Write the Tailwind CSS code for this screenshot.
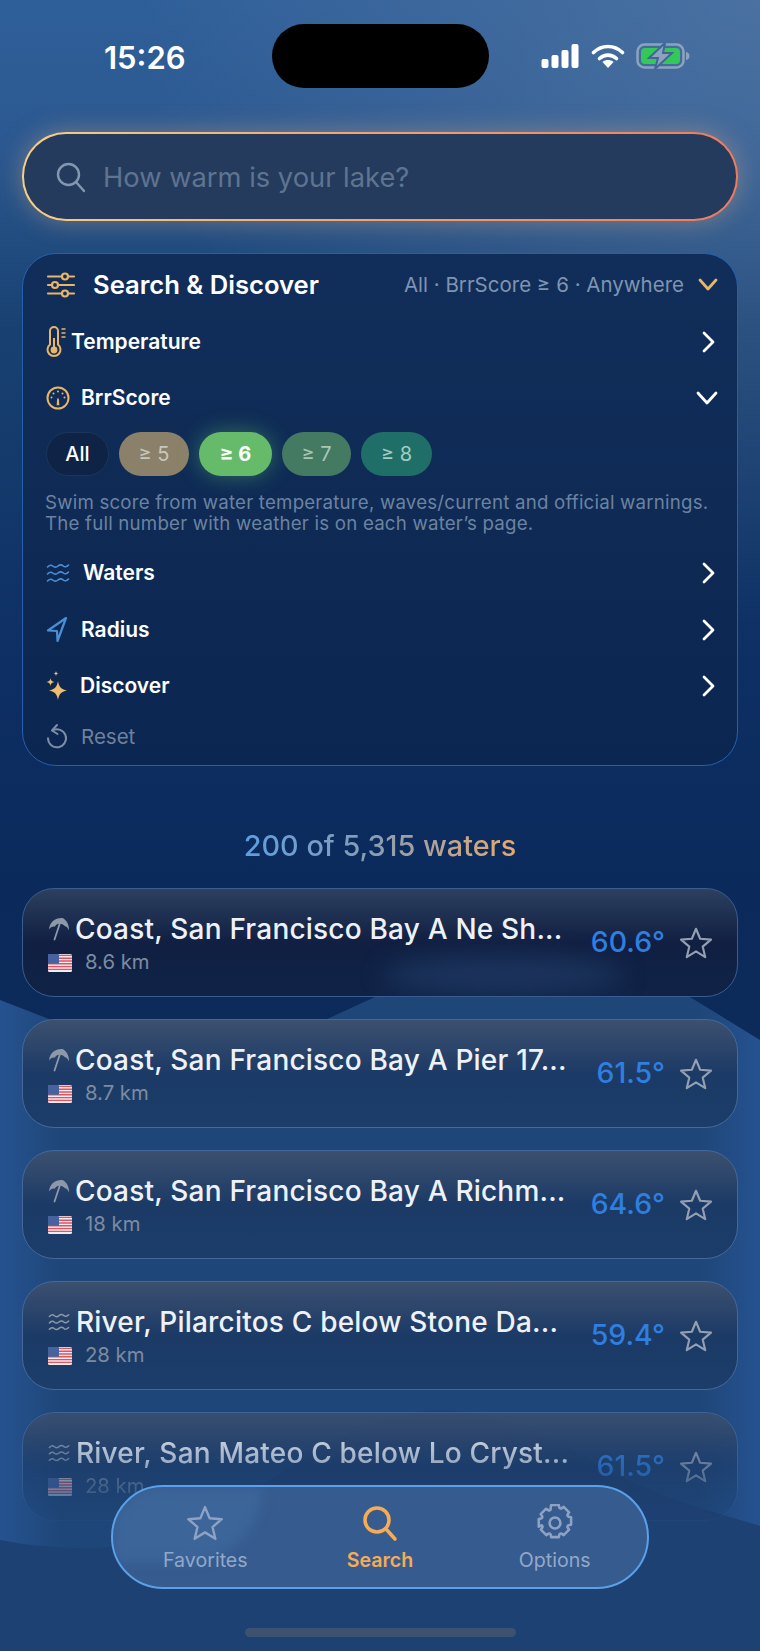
<!DOCTYPE html>
<html lang="en">

<head>
  <meta charset="UTF-8" />
  <meta name="viewport" content="width=device-width, initial-scale=1.0" />
  <title>Search | BrrScore</title>
  <script src="https://cdn.jsdelivr.net/npm/@tailwindcss/browser@4"></script>
</head>

<body class="bg-[#1e4476]">
  <!-- Shared icons -->
  <svg class="hidden" xmlns="http://www.w3.org/2000/svg">
    <symbol id="chev-right" viewBox="0 0 16 24"><path d="M4 3l9 9-9 9" fill="none" stroke="currentColor" stroke-width="2.800" stroke-linecap="round" stroke-linejoin="round" /></symbol>
    <symbol id="star" viewBox="0 0 32 32"><path d="M16 2.600l3.900 9.400 10.200.8-7.800 6.600 2.400 9.900L16 23.900l-8.700 5.400 2.400-9.900-7.800-6.600 10.200-.8z" fill="none" stroke="currentColor" stroke-width="2" stroke-linejoin="round" /></symbol>
    <symbol id="umbrella" viewBox="0 0 22 24"><path d="M14.500 1C7.500.5 1.500 5 1 12.500c1.500-2.500 3.500-3.500 6-3 1-2 2.500-3 4.500-2.800 2-.3 4 .5 5.500 2.500 1.500.2 3 1.500 4 4.300 .3-5.500-2.500-10.800-6.500-12.500z" fill="currentColor" /><path d="M12 6L6.500 22.500" fill="none" stroke="currentColor" stroke-width="1.800" stroke-linecap="round" /></symbol>
    <symbol id="waves" viewBox="0 0 24 20"><g fill="none" stroke="currentColor" stroke-width="1.600" stroke-linecap="round"><path d="M1.500 4c2-2.200 4-2.200 5.200-1 1.600 1.500 3.600 1.500 5.300 0s3.600-1.500 5.300 0c1.200 1.200 3.200 1.200 5.200-1" /><path d="M1.500 11c2-2.200 4-2.200 5.200-1 1.600 1.500 3.600 1.500 5.300 0s3.600-1.500 5.300 0c1.200 1.200 3.200 1.200 5.200-1" /><path d="M1.500 18c2-2.200 4-2.200 5.200-1 1.600 1.500 3.600 1.500 5.300 0s3.600-1.500 5.300 0c1.200 1.200 3.200 1.200 5.200-1" /></g></symbol>
    <symbol id="flag" viewBox="0 0 24 18">
      <rect width="24" height="18" rx="1.500" fill="#f2e9ea" />
      <path d="M0 1.400h24M0 4.200h24M0 7h24M0 9.800h24M0 12.600h24M0 15.400h24" stroke="#dc5565" stroke-width="1.400" />
      <rect width="11" height="9.800" rx="1" fill="#46639f" />
    </symbol>
  </svg>

  <div class="relative w-[760px] h-[1651px] overflow-hidden font-['Inter',sans-serif]">
    <!-- Backdrop with the two hills -->
    <svg class="absolute inset-0" width="760" height="1651" viewBox="0 0 760 1651" xmlns="http://www.w3.org/2000/svg" aria-hidden="true">
      <defs>
        <linearGradient id="sky" x1="0" y1="0" x2="0" y2="1">
          <stop offset="0" stop-color="#2f5f99" />
          <stop offset="0.09" stop-color="#2b5890" />
          <stop offset="0.2" stop-color="#184171" />
          <stop offset="0.4" stop-color="#0e2f64" />
          <stop offset="0.53" stop-color="#0b2a5c" />
          <stop offset="0.62" stop-color="#0c2a5a" />
        </linearGradient>
        <radialGradient id="glowRight" gradientUnits="userSpaceOnUse" cx="760" cy="0" r="620">
          <stop offset="0" stop-color="#5f7fa8" stop-opacity="0.55" />
          <stop offset="1" stop-color="#5f7fa8" stop-opacity="0" />
        </radialGradient>
        <linearGradient id="edges" x1="0" y1="0" x2="1" y2="0">
          <stop offset="0" stop-color="#255290" />
          <stop offset="0.08" stop-color="#1f4678" />
          <stop offset="0.92" stop-color="#1f4678" />
          <stop offset="1" stop-color="#255290" />
        </linearGradient>
      </defs>
      <rect width="760" height="1651" fill="url(#sky)" />
      <rect width="760" height="620" fill="url(#glowRight)" />
      <path d="M0 1000L62 1024 90 1040V1060H300L325 1020 375 997H690L760 1040V1651H0z" fill="url(#edges)" />
      <path d="M0 1540C50 1550 110 1552 160 1540 230 1524 300 1440 400 1415 470 1400 530 1425 600 1465 660 1500 710 1510 760 1526V1651H0z" fill="#1e4173" />
    </svg>

    <div class="relative px-[22px]">
      <!-- Status bar -->
      <div class="flex items-center justify-between h-[111px] pl-[82px] pr-[48px]">
        <span class="text-[31px] leading-none font-semibold text-white pt-[4px]">15:26</span>
        <div class="absolute left-[272px] top-[24px] w-[217px] h-[64px] rounded-[32px] bg-black"></div>
        <div class="flex items-center gap-[11px]">
          <svg width="39" height="24" viewBox="0 0 38 24" class="text-white"><g fill="currentColor"><rect x="0" y="15" width="7" height="9" rx="2" /><rect x="10" y="11" width="7" height="13" rx="2" /><rect x="20" y="6" width="7" height="18" rx="2" /><rect x="30" y="0" width="7" height="24" rx="2" /></g></svg>
          <svg width="34" height="24" viewBox="0 0 34 24" class="text-white"><g fill="none" stroke="currentColor" stroke-width="3.600" stroke-linecap="round"><path d="M2.500 8.500C11 .5 23 .5 31.500 8.500" /><path d="M8.500 14.500C13.500 10 20.500 10 25.500 14.500" /></g><path d="M17 24l-5.500-6c3-2.600 8-2.600 11 0z" fill="currentColor" /></svg>
          <svg width="54" height="26" viewBox="0 0 54 26">
            <rect x="1.500" y="1.500" width="46" height="23" rx="7" fill="none" stroke="#8ea2bd" stroke-width="2.500" />
            <rect x="5" y="5" width="39" height="16" rx="4" fill="#34c759" />
            <path d="M50 9c2.500.6 3.500 2 3.500 4s-1 3.400-3.500 4z" fill="#8ea2bd" />
            <path d="M29 0L13 15h9l-3 11 17-16h-9z" fill="#8ea2bd" stroke="#3f6698" stroke-width="2" />
          </svg>
        </div>
      </div>

      <!-- Search field -->
      <div class="mt-[21px] h-[89px] rounded-[44px] p-[2px] bg-gradient-to-r from-[#f6cf85] via-[#efa271] to-[#ee7b5e] shadow-[0_0_26px_rgba(238,180,130,0.38)]">
        <div class="flex items-center h-full rounded-[42px] bg-[#243b5e] pl-[31px]">
          <svg width="32" height="32" viewBox="0 0 32 32" class="text-[#8497ae]"><g fill="none" stroke="currentColor" stroke-width="2.400" stroke-linecap="round"><circle cx="13.500" cy="13.500" r="10.500" /><path d="M21 21l8 9" /></g></svg>
          <span class="ml-[16px] pt-[3px] text-[27.300px] text-[#5f748f]">How warm is your lake?</span>
        </div>
      </div>

      <!-- Search & Discover panel -->
      <section class="mt-[32px] h-[513px] rounded-[34px] border-[1.500px] border-[#2560ae] bg-gradient-to-b from-[#112e5a] to-[#0b2650] pl-[23px] pr-[19px] pt-[11px]">
        <div class="flex items-center h-[40px]">
          <svg width="30" height="26" viewBox="0 0 30 26" class="text-[#e9b566]"><g fill="none" stroke="currentColor" stroke-width="2.200" stroke-linecap="round"><path d="M2 4.500h26M2 13h26M2 21.500h26" /><circle cx="19" cy="4.500" r="3" fill="#112e5a" /><circle cx="9" cy="13" r="3" fill="#112e5a" /><circle cx="19" cy="21.500" r="3" fill="#112e5a" /></g></svg>
          <h2 class="ml-[17px] text-[25.600px] font-semibold text-white">Search &amp; Discover</h2>
          <span class="ml-auto text-[20.500px] text-[#7f94b0]">All · BrrScore ≥ 6 · Anywhere</span>
          <svg width="20" height="14" viewBox="0 0 20 14" class="ml-[14px] text-[#e9b566]"><path d="M2 2l8 9 8-9" fill="none" stroke="currentColor" stroke-width="2.800" stroke-linecap="round" stroke-linejoin="round" /></svg>
        </div>

        <div class="mt-[8px] flex items-center h-[57px]">
          <svg width="22" height="32" viewBox="0 0 22 32" class="text-[#e9b566]"><g fill="none" stroke="currentColor" stroke-width="2"><path d="M4 18.500V5a4 4 0 0 1 8 0v13.500a6.500 6.500 0 1 1-8 0z" /><path d="M15.500 3h4M15.500 7h4M15.500 11h4" stroke-width="1.500" /></g><circle cx="8" cy="24" r="3.400" fill="currentColor" /><path d="M8 24V12" stroke="currentColor" stroke-width="2" /></svg>
          <span class="ml-[3px] text-[21px] font-semibold text-white">Temperature</span>
          <svg width="16" height="24" class="ml-auto mr-[2px] text-white"><use href="#chev-right" /></svg>
        </div>

        <div class="flex items-center h-[56px]">
          <svg width="24" height="24" viewBox="0 0 24 24" class="text-[#e9b566]"><g fill="none" stroke="currentColor"><circle cx="12" cy="12" r="10.500" stroke-width="2" /><path d="M12 12.500l-.5 6h1z" stroke-width="1.600" /></g><g fill="currentColor"><circle cx="12" cy="5.500" r="1" /><circle cx="7.500" cy="7.500" r="1" /><circle cx="16.500" cy="7.500" r="1" /><circle cx="5.500" cy="11.500" r="1" /><circle cx="18.500" cy="11.500" r="1" /></g></svg>
          <span class="ml-[11px] text-[21px] font-semibold text-white">BrrScore</span>
          <svg width="22" height="14" viewBox="0 0 22 14" class="ml-auto text-white"><path d="M2 2l9 10 9-10" fill="none" stroke="currentColor" stroke-width="2.800" stroke-linecap="round" stroke-linejoin="round" /></svg>
        </div>

        <!-- Score chips -->
        <div class="mt-[6px] flex gap-[10px] text-[20px]">
          <span class="flex items-center justify-center h-[44px] w-[63px] rounded-[22px] border border-[#1c3658] bg-[#0e2345] font-medium text-white">All</span>
          <span class="flex items-center justify-center h-[44px] w-[70px] rounded-[22px] bg-[#8b8069] text-[#c8c6bd]">≥ 5</span>
          <span class="flex items-center justify-center h-[44px] w-[73px] rounded-[22px] bg-[#66bb6a] font-bold text-white shadow-[0_0_22px_rgba(90,190,110,0.45)]">≥ 6</span>
          <span class="flex items-center justify-center h-[44px] w-[69px] rounded-[22px] bg-[#447a62] text-[#a9c6b6]">≥ 7</span>
          <span class="flex items-center justify-center h-[44px] w-[71px] rounded-[22px] bg-[#1f6e67] text-[#a3cdc4]">≥ 8</span>
        </div>
        <p class="-ml-[1px] mt-[16px] text-[18.700px] leading-[21px] tracking-[0.200px] whitespace-nowrap text-[#6c83a0]">Swim score from water temperature, waves/current and official warnings.<br />The full number with weather is on each water’s page.</p>

        <div class="mt-[11px] flex items-center h-[56px]">
          <svg width="24" height="20" class="text-[#4a8fd6]"><use href="#waves" /></svg>
          <span class="ml-[13px] text-[21px] font-semibold text-white">Waters</span>
          <svg width="16" height="24" class="ml-auto mr-[2px] text-white"><use href="#chev-right" /></svg>
        </div>
        <div class="flex items-center h-[57px]">
          <svg width="22" height="28" viewBox="0 0 22 28" class="text-[#4a8fd6]"><path d="M20 2L2 14.500l9 .5 .5 10z" fill="none" stroke="currentColor" stroke-width="2.200" stroke-linejoin="round" /></svg>
          <span class="ml-[13px] text-[21px] font-semibold text-white">Radius</span>
          <svg width="16" height="24" class="ml-auto mr-[2px] text-white"><use href="#chev-right" /></svg>
        </div>
        <div class="flex items-center h-[56px]">
          <svg width="22" height="32" viewBox="0 0 22 32" class="text-[#efbd6d]"><g fill="currentColor"><path d="M12 11c1 6 3 8 9 9.500-6 1.500-8 3.500-9 9.500-1-6-3-8-9-9.500 6-1.500 8-3.500 9-9.500z" /><path d="M4.500 8c.4 2.600 1.300 3.500 4 4-2.700.5-3.600 1.400-4 4-.4-2.600-1.300-3.500-4-4 2.700-.5 3.600-1.400 4-4z" /><path d="M10 1c.3 1.800.8 2.300 2.500 2.600C10.800 3.900 10.300 4.400 10 6.200c-.3-1.800-.8-2.300-2.500-2.600C9.200 3.300 9.700 2.800 10 1z" /></g></svg>
          <span class="ml-[12px] text-[21px] font-semibold text-white">Discover</span>
          <svg width="16" height="24" class="ml-auto mr-[2px] text-white"><use href="#chev-right" /></svg>
        </div>
        <div class="flex items-center h-[46px]">
          <svg width="22" height="28" viewBox="0 0 22 28" class="text-[#7d8ea6]"><g fill="none" stroke="currentColor" stroke-width="2" stroke-linecap="round" stroke-linejoin="round"><path d="M6.500 7.500a9 9 0 1 1-4.500 7.800" /><path d="M11 2L6 7.500l5.500 3.500" /></g></svg>
          <span class="ml-[13px] text-[20.500px] text-[#6f819b]">Reset</span>
        </div>
      </section>

      <!-- Result count -->
      <p class="mt-[63px] text-center text-[28.800px] leading-[34px] font-medium bg-gradient-to-r from-[#5c9ee0] via-[#8c9db0] to-[#e8a868] bg-clip-text text-transparent w-fit mx-auto">200 of 5,315 waters</p>

      <!-- Results -->
      <div class="mt-[25px] flex flex-col gap-[22px]">
        <article class="relative flex items-center h-[109px] rounded-[32px] border-[1.500px] border-[#3a5c8e] bg-gradient-to-b from-[#2d405f] via-[#101f42] to-[#0f2347] pl-[25px] pr-[24px] overflow-hidden">
          <span class="absolute left-[360px] top-[66px] w-[240px] h-[40px] rounded-[50%] bg-[#2a4a78]/45 blur-[12px]"></span>
          <div class="relative flex-1 min-w-0 pt-[5px]">
            <div class="flex items-center gap-[5px]">
              <svg width="22" height="24" class="shrink-0 text-[#8d99aa]"><use href="#umbrella" /></svg>
              <span class="text-[28px] leading-[34px] tracking-[0.2px] font-medium whitespace-nowrap text-[#eef2f8]">Coast, San Francisco Bay A Ne Sh...</span>
            </div>
            <div class="mt-[1px] flex items-center gap-[13px] text-[20.300px] text-[#7d8ba1]">
              <svg width="24" height="18"><use href="#flag" /></svg><span>8.6 km</span>
            </div>
          </div>
          <span class="relative ml-[8px] text-[28.400px] font-medium text-[#2f7fe0]">60.6°</span>
          <svg width="34" height="34" class="relative ml-[14px] text-[#94a0b2]"><use href="#star" /></svg>
        </article>

        <article class="flex items-center h-[109px] rounded-[32px] border-[1.500px] border-[#44689b] bg-gradient-to-b from-[#3c506f] via-[#1b3a66] to-[#1c3d6a] pl-[25px] pr-[24px]">
          <div class="flex-1 min-w-0 pt-[5px]">
            <div class="flex items-center gap-[5px]">
              <svg width="22" height="24" class="shrink-0 text-[#8d99aa]"><use href="#umbrella" /></svg>
              <span class="text-[28px] leading-[34px] tracking-[0.2px] font-medium whitespace-nowrap text-[#eef2f8]">Coast, San Francisco Bay A Pier 17...</span>
            </div>
            <div class="mt-[1px] flex items-center gap-[13px] text-[20.300px] text-[#7d8ba1]">
              <svg width="24" height="18"><use href="#flag" /></svg><span>8.7 km</span>
            </div>
          </div>
          <span class="ml-[8px] text-[28.400px] font-medium text-[#2f7fe0]">61.5°</span>
          <svg width="34" height="34" class="ml-[14px] text-[#94a0b2]"><use href="#star" /></svg>
        </article>

        <article class="flex items-center h-[109px] rounded-[32px] border-[1.500px] border-[#44689b] bg-gradient-to-b from-[#3c506f] via-[#1b3a66] to-[#1c3d6a] pl-[25px] pr-[24px]">
          <div class="flex-1 min-w-0 pt-[5px]">
            <div class="flex items-center gap-[5px]">
              <svg width="22" height="24" class="shrink-0 text-[#8d99aa]"><use href="#umbrella" /></svg>
              <span class="text-[28px] leading-[34px] tracking-[0.2px] font-medium whitespace-nowrap text-[#eef2f8]">Coast, San Francisco Bay A Richm...</span>
            </div>
            <div class="mt-[1px] flex items-center gap-[13px] text-[20.300px] text-[#7d8ba1]">
              <svg width="24" height="18"><use href="#flag" /></svg><span>18 km</span>
            </div>
          </div>
          <span class="ml-[8px] text-[28.400px] font-medium text-[#2f7fe0]">64.6°</span>
          <svg width="34" height="34" class="ml-[14px] text-[#94a0b2]"><use href="#star" /></svg>
        </article>

        <article class="flex items-center h-[109px] rounded-[32px] border-[1.500px] border-[#44689b] bg-gradient-to-b from-[#3c506f] via-[#1b3a66] to-[#1c3d6a] pl-[25px] pr-[24px]">
          <div class="flex-1 min-w-0 pt-[5px]">
            <div class="flex items-center gap-[6px]">
              <svg width="22" height="20" class="shrink-0 text-[#8d99aa]"><use href="#waves" /></svg>
              <span class="text-[28px] leading-[34px] tracking-[0.2px] font-medium whitespace-nowrap text-[#eef2f8]">River, Pilarcitos C below Stone Da...</span>
            </div>
            <div class="mt-[1px] flex items-center gap-[13px] text-[20.300px] text-[#7d8ba1]">
              <svg width="24" height="18"><use href="#flag" /></svg><span>28 km</span>
            </div>
          </div>
          <span class="ml-[8px] text-[28.400px] font-medium text-[#2f7fe0]">59.4°</span>
          <svg width="34" height="34" class="ml-[14px] text-[#94a0b2]"><use href="#star" /></svg>
        </article>

        <article class="flex items-center h-[109px] rounded-[32px] border-[1.500px] border-[#44689b] bg-gradient-to-b from-[#3c506f] via-[#1b3a66] to-[#1c3d6a] pl-[25px] pr-[24px] [mask-image:linear-gradient(to_bottom,rgba(0,0,0,0.85)_20%,rgba(0,0,0,0.1)_100%)]">
          <div class="flex-1 min-w-0 pt-[5px]">
            <div class="flex items-center gap-[6px]">
              <svg width="22" height="20" class="shrink-0 text-[#8d99aa]"><use href="#waves" /></svg>
              <span class="text-[28px] leading-[34px] tracking-[0.2px] font-medium whitespace-nowrap text-[#eef2f8]">River, San Mateo C below Lo Cryst...</span>
            </div>
            <div class="mt-[1px] flex items-center gap-[13px] text-[20.300px] text-[#7d8ba1]">
              <svg width="24" height="18"><use href="#flag" /></svg><span>28 km</span>
            </div>
          </div>
          <span class="ml-[8px] text-[28.400px] font-medium text-[#2f7fe0]">61.5°</span>
          <svg width="34" height="34" class="ml-[14px] text-[#94a0b2]"><use href="#star" /></svg>
        </article>
      </div>
    </div>

    <!-- Floating tab bar -->
    <nav class="absolute left-[111px] top-[1485px] w-[538px] h-[104px] pt-[6px] rounded-[52px] border-2 border-[#5ba0e8] bg-[#365b8f] flex items-center text-[19.600px] text-[#93a8c8] overflow-hidden">
      <div class="absolute left-0 top-0 w-[150px] h-[75px] rounded-tl-[50px] rounded-br-[80px] bg-[#3f6a9f] blur-[6px] opacity-70"></div>
      <div class="relative flex-1 ml-[5px] flex flex-col items-center gap-[4px]">
        <svg width="38" height="38" class="text-[#8ea3c4]"><use href="#star" /></svg>
        <span>Favorites</span>
      </div>
      <div class="relative flex-1 flex flex-col items-center gap-[4px] text-[#f6ab55] font-semibold">
        <svg width="38" height="38" viewBox="0 0 38 38"><g fill="none" stroke="currentColor" stroke-width="3.600" stroke-linecap="round"><circle cx="16" cy="16" r="12" /><path d="M25 25l9 10" /></g></svg>
        <span>Search</span>
      </div>
      <div class="relative flex-1 mr-[5px] flex flex-col items-center gap-[4px]">
        <svg width="38" height="38" viewBox="2 1.500 20 21" class="text-[#8ea3c4]"><g fill="none" stroke="currentColor" stroke-width="1.400" stroke-linecap="round" stroke-linejoin="round"><path d="M9.600 3.400l.3-1.400h4.200l.3 1.400a.8.800 0 0 0 1.200.5l1.200-.8 3 3-.8 1.200a.8.800 0 0 0 .5 1.200l1.400.3v4.200l-1.400.3a.8.800 0 0 0-.5 1.200l.8 1.200-3 3-1.200-.8a.8.800 0 0 0-1.200.5l-.3 1.400H9.900l-.3-1.400a.8.800 0 0 0-1.200-.5l-1.200.8-3-3 .8-1.200a.8.800 0 0 0-.5-1.200L3 14V9.800l1.400-.3a.8.800 0 0 0 .5-1.200l-.8-1.200 3-3 1.200.8a.8.800 0 0 0 1.300-.5z" /><circle cx="12" cy="12" r="3" /></g></svg>
        <span>Options</span>
      </div>
    </nav>

    <!-- Home indicator -->
    <div class="absolute left-[245px] top-[1628px] w-[271px] h-[9px] rounded-full bg-[#3c5270]"></div>
  </div>
</body>

</html>
